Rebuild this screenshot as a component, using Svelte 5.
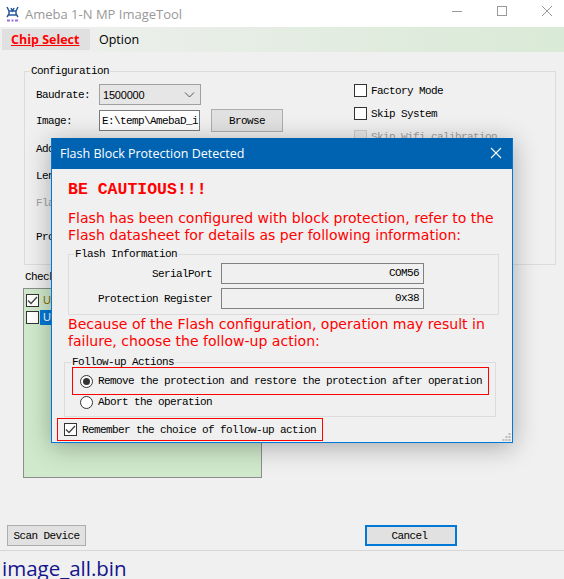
<script lang="ts">
  const rows = [
    { label: 'Address:', disabled: false },
    { label: 'Length:', disabled: false },
    { label: 'Flash:', disabled: true },
    { label: 'Protect:', disabled: false }
  ];
  let remember = $state(true);
  let action = $state('remove');
</script>

<div class="window">
  <div class="titlebar">
    <svg class="logo" width="15" height="16" viewBox="0 0 15 16">
      <path d="M2 1l2 4v3l-2 3M13 1l-2 4v3l2 3M4 5h7M4 9h7M6 2l1.5 3L9 2" fill="none" stroke="#2a5a9e" stroke-width="1.5" />
      <path d="M2 14.5h3M6.5 14.5h2M10 14.5h3" stroke="#9a6fe0" stroke-width="2" fill="none" />
    </svg>
    <span class="app-title">Ameba 1-N MP ImageTool</span>
    <div class="controls">
      <svg width="12" height="12" viewBox="0 0 12 12"><path d="M1 6.5h10" stroke="#999" fill="none" /></svg>
      <svg width="12" height="12" viewBox="0 0 12 12"><rect x="1.5" y="1.5" width="9" height="9" stroke="#999" fill="none" /></svg>
      <svg width="12" height="12" viewBox="0 0 12 12"><path d="M1 1l10 10M11 1L1 11" stroke="#999" fill="none" /></svg>
    </div>
  </div>

  <div class="tabs">
    <div class="tab active">Chip Select</div>
    <div class="tab">Option</div>
  </div>

  <div class="page">
    <fieldset class="group config">
      <legend>Configuration</legend>
      <div class="config-cols">
        <div class="config-left">
          <div class="form-row">
            <span class="form-label">Baudrate:</span>
            <div class="select"><span>1500000</span>
              <svg width="11" height="6" viewBox="0 0 11 6"><path d="M1 .5l4.5 4.5L10 .5" fill="none" stroke="#555" /></svg>
            </div>
          </div>
          <div class="form-row image-row">
            <span class="form-label">Image:</span>
            <div class="input mono">E:\temp\AmebaD_i</div>
            <button class="btn browse">Browse</button>
          </div>
          {#each rows as row}
            <div class="form-row tall" class:disabled={row.disabled}>
              <span class="form-label">{row.label}</span>
              <div class="input"></div>
            </div>
          {/each}
        </div>
        <div class="config-right">
          <label class="check"><span class="box"></span>Factory Mode</label>
          <label class="check"><span class="box"></span>Skip System</label>
          <label class="check disabled"><span class="box"></span>Skip Wifi calibration</label>
        </div>
      </div>
    </fieldset>

    <div class="check-label">Check Devices</div>
    <div class="device-list">
      <div class="device">
        <span class="box small-check">
          <svg width="11" height="11" viewBox="0 0 11 11"><path d="M1 5.5l3 3L10 2" fill="none" stroke="#444" stroke-width="1.3" /></svg>
        </span>
        <span class="device-name">UART</span>
      </div>
      <div class="device">
        <span class="box"></span>
        <span class="device-name selected">UART</span>
      </div>
    </div>

    <div class="actions">
      <button class="btn scan">Scan Device</button>
      <button class="btn cancel">Cancel</button>
    </div>
  </div>

  <div class="statusbar">image_all.bin</div>

  <div class="dialog">
    <div class="dialog-title">
      <span>Flash Block Protection Detected</span>
      <svg width="12" height="12" viewBox="0 0 12 12"><path d="M1 1l10 10M11 1L1 11" stroke="#fff" fill="none" stroke-width="1.1" /></svg>
    </div>
    <div class="dialog-body">
      <div class="caution">BE CAUTIOUS!!!</div>
      <p class="warning first">Flash has been configured with block protection, refer to the Flash datasheet for details as per following information:</p>

      <fieldset class="group info">
        <legend>Flash Information</legend>
        <div class="info-row">
          <span class="info-label">SerialPort</span>
          <div class="info-value">COM56</div>
        </div>
        <div class="info-row">
          <span class="info-label">Protection Register</span>
          <div class="info-value">0x38</div>
        </div>
      </fieldset>

      <p class="warning second">Because of the Flash configuration, operation may result in failure, choose the follow-up action:</p>

      <fieldset class="group follow">
        <legend>Follow-up Actions</legend>
        <button class="radio-row marked" onclick={() => (action = 'remove')}>
          <span class="radio" class:on={action === 'remove'}></span>Remove the protection and restore the protection after operation
        </button>
        <button class="radio-row" onclick={() => (action = 'abort')}>
          <span class="radio" class:on={action === 'abort'}></span>Abort the operation
        </button>
      </fieldset>

      <button class="remember" onclick={() => (remember = !remember)}>
        <span class="box">
          {#if remember}
            <svg width="11" height="11" viewBox="0 0 11 11"><path d="M1 5.5l3 3L10 2" fill="none" stroke="#444" stroke-width="1.3" /></svg>
          {/if}
        </span>Remember the choice of follow-up action
      </button>

      <svg class="grip" width="9" height="9" viewBox="0 0 9 9" fill="#bbb">
        <rect x="6.5" y="0" width="2" height="2" />
        <rect x="3.5" y="3" width="2" height="2" /><rect x="6.5" y="3" width="2" height="2" />
        <rect x="0.5" y="6" width="2" height="2" /><rect x="3.5" y="6" width="2" height="2" /><rect x="6.5" y="6" width="2" height="2" />
      </svg>
    </div>
  </div>
</div>

<style>
  :global(body) {
    margin: 0;
  }
  .window {
    position: relative;
    width: 564px;
    height: 579px;
    overflow: hidden;
    display: flex;
    flex-direction: column;
    background: #f0f0f0;
    font-family: "Liberation Mono", monospace;
    font-size: 11px;
    letter-spacing: -0.6px;
    color: #000;
  }
  button {
    font: inherit;
    letter-spacing: inherit;
    color: inherit;
  }

  /* Title bar */
  .titlebar {
    flex: none;
    height: 27px;
    display: flex;
    align-items: center;
    background: #fff;
    padding-left: 5px;
  }
  .logo {
    margin-right: 5px;
  }
  .app-title {
    font-family: "Open Sans", sans-serif;
    font-size: 13px;
    letter-spacing: 0;
    color: #999;
  }
  .controls {
    margin-left: auto;
    display: flex;
    gap: 33px;
    padding: 0 11px 5px 0;
  }

  /* Tabs */
  .tabs {
    flex: none;
    height: 25px;
    display: flex;
    align-items: center;
    padding-left: 2px;
    background: linear-gradient(to right, #f0f0f0, #d9ead6);
  }
  .tab {
    font-family: "Open Sans", sans-serif;
    font-size: 12.5px;
    letter-spacing: 0;
    padding: 0 9px;
    line-height: 21px;
  }
  .tab.active {
    width: 70px;
    background: #e0e0e0;
    color: #f00;
    font-weight: 700;
    text-decoration: underline;
  }

  .page {
    flex: 1;
    min-height: 0;
    display: flex;
    flex-direction: column;
  }

  /* Groups */
  .group {
    margin: 0;
    padding: 0;
    min-width: 0;
    border: 1px solid #dcdcdc;
  }
  legend {
    padding: 0 1px;
    margin-left: 5px;
    line-height: 12px;
  }
  .config {
    margin: 13px 8px 0 24px;
    height: 200px;
    box-sizing: border-box;
  }
  .config-cols {
    display: flex;
    padding: 5px 0 0 11px;
  }
  .config-left {
    width: 318px;
  }
  .form-row {
    display: flex;
    align-items: center;
    height: 25px;
  }
  .form-row.image-row {
    height: 27px;
    margin-bottom: 1px;
  }
  .form-row.tall {
    height: 27px;
  }
  .form-row.tall:last-child {
    margin-top: 7px;
  }
  .form-label {
    width: 63px;
  }
  .disabled {
    color: #a0a0a0;
  }
  .select {
    width: 102px;
    height: 21px;
    box-sizing: border-box;
    border: 1px solid #a0a0a0;
    background: #e6e6e6;
    display: flex;
    align-items: center;
    justify-content: space-between;
    padding: 0 5px 0 3px;
    font-family: "Liberation Sans", sans-serif;
    font-size: 11px;
    letter-spacing: -0.2px;
  }
  .input {
    width: 101px;
    height: 21px;
    box-sizing: border-box;
    border: 1px solid #7a7a7a;
    background: #fff;
    padding-left: 2px;
    line-height: 20px;
    white-space: nowrap;
    overflow: hidden;
  }
  .btn {
    box-sizing: border-box;
    height: 21px;
    border: 1px solid #adadad;
    background: #e1e1e1;
    padding: 0;
  }
  .browse {
    width: 72px;
    height: 23px;
    margin-left: 11px;
    padding-top: 1px;
  }
  .config-right {
    display: flex;
    flex-direction: column;
    gap: 10px;
    padding-top: 2px;
  }
  .check {
    display: flex;
    align-items: center;
    gap: 4px;
    height: 13px;
  }
  .box {
    flex: none;
    width: 13px;
    height: 13px;
    box-sizing: border-box;
    border: 1px solid #333;
    background: #fff;
    display: flex;
    align-items: center;
    justify-content: center;
  }
  .check.disabled .box {
    border-color: #ccc;
    background: #e6e6e6;
  }

  /* Device list */
  .check-label {
    margin: 6px 0 0 25px;
    line-height: 12px;
  }
  .device-list {
    margin: 5px 0 0 23px;
    width: 239px;
    height: 190px;
    box-sizing: border-box;
    border: 1px solid #8a8f8e;
    background: #d0e9cc;
    padding: 3px 2px;
  }
  .device {
    display: flex;
    align-items: center;
    gap: 1px;
    height: 17px;
  }
  .device-name {
    padding-left: 3px;
    flex: 1;
    line-height: 15px;
    font-family: "Liberation Sans", sans-serif;
    letter-spacing: 0;
    color: #8a6d00;
  }
  .device-name.selected {
    background: #0078d7;
    color: #fff;
  }

  .actions {
    margin-top: 47px;
    display: flex;
  }
  .scan {
    margin-left: 7px;
    width: 79px;
  }
  .cancel {
    margin-left: 279px;
    width: 92px;
    border: 2px solid #0078d7;
    padding-right: 3px;
  }

  .statusbar {
    flex: none;
    height: 29px;
    box-sizing: border-box;
    border-top: 1px solid #d7d7d7;
    padding-left: 2px;
    font-family: "Open Sans", sans-serif;
    font-size: 20.5px;
    letter-spacing: 0;
    line-height: 34px;
    color: #14148c;
    overflow: hidden;
  }

  /* Dialog */
  .dialog {
    position: absolute;
    left: 51px;
    top: 138px;
    width: 462px;
    height: 305px;
    box-sizing: border-box;
    border: 1px solid #0078d7;
    border-top-color: #0063b1;
    background: #f0f0f0;
    display: flex;
    flex-direction: column;
    box-shadow: 0 4px 24px rgba(0, 0, 0, 0.3);
  }
  .dialog-title {
    flex: none;
    height: 30px;
    box-sizing: border-box;
    padding: 0 10px 2px 8px;
    background: #0063b1;
    color: #fff;
    display: flex;
    align-items: center;
    justify-content: space-between;
    font-family: "Open Sans", sans-serif;
    font-size: 12.5px;
    letter-spacing: 0;
  }
  .dialog-body {
    position: relative;
    flex: 1;
    min-height: 0;
    display: flex;
    flex-direction: column;
    padding-left: 16px;
  }
  .caution {
    margin-top: 11px;
    font-size: 16.5px;
    letter-spacing: 0;
    font-weight: 700;
    line-height: 19px;
    color: #f00;
  }
  .warning {
    margin: 0;
    width: 440px;
    font-family: "DejaVu Sans", sans-serif;
    font-size: 14.05px;
    letter-spacing: 0;
    line-height: 17px;
    color: #f00;
  }
  .warning.first {
    margin-top: 11px;
  }
  .warning.second {
    margin-top: 1px;
  }
  .info {
    margin: 4px 0 0 0;
    width: 431px;
    height: 67px;
    box-sizing: border-box;
    padding-top: 1px;
  }
  .info legend {
    margin-left: 5px;
  }
  .info-row {
    display: flex;
    align-items: center;
    height: 25px;
  }
  .info-label {
    width: 143px;
    text-align: right;
    margin-right: 9px;
  }
  .info-value {
    width: 203px;
    height: 21px;
    box-sizing: border-box;
    border: 1px solid #808080;
    text-align: right;
    padding-right: 4px;
    line-height: 19px;
  }
  .follow {
    margin: 6px 0 0 -4px;
    width: 432px;
    height: 61px;
    box-sizing: border-box;
    padding: 0 0 0 7px;
  }
  .follow legend {
    margin-left: -1px;
  }
  .radio-row {
    display: flex;
    align-items: center;
    gap: 5px;
    padding: 0 0 0 7px;
    background: none;
    border: 1px solid transparent;
    width: 417px;
    box-sizing: border-box;
    text-align: left;
    height: 14px;
  }
  .radio-row.marked {
    height: 28px;
    margin-top: -1px;
    border: 1px solid #f00;
  }
  .radio {
    flex: none;
    width: 13px;
    height: 13px;
    box-sizing: border-box;
    border: 1px solid #333;
    border-radius: 50%;
    background: #fff;
    display: flex;
    align-items: center;
    justify-content: center;
  }
  .radio.on::after {
    content: "";
    width: 7px;
    height: 7px;
    border-radius: 50%;
    background: #333;
  }
  .remember {
    margin: 1px 0 0 -11px;
    width: 266px;
    height: 23px;
    box-sizing: border-box;
    border: 1px solid #f00;
    background: none;
    display: flex;
    align-items: center;
    gap: 5px;
    padding: 0 0 0 6px;
  }
  .grip {
    position: absolute;
    right: 1px;
    bottom: 0;
  }
</style>
